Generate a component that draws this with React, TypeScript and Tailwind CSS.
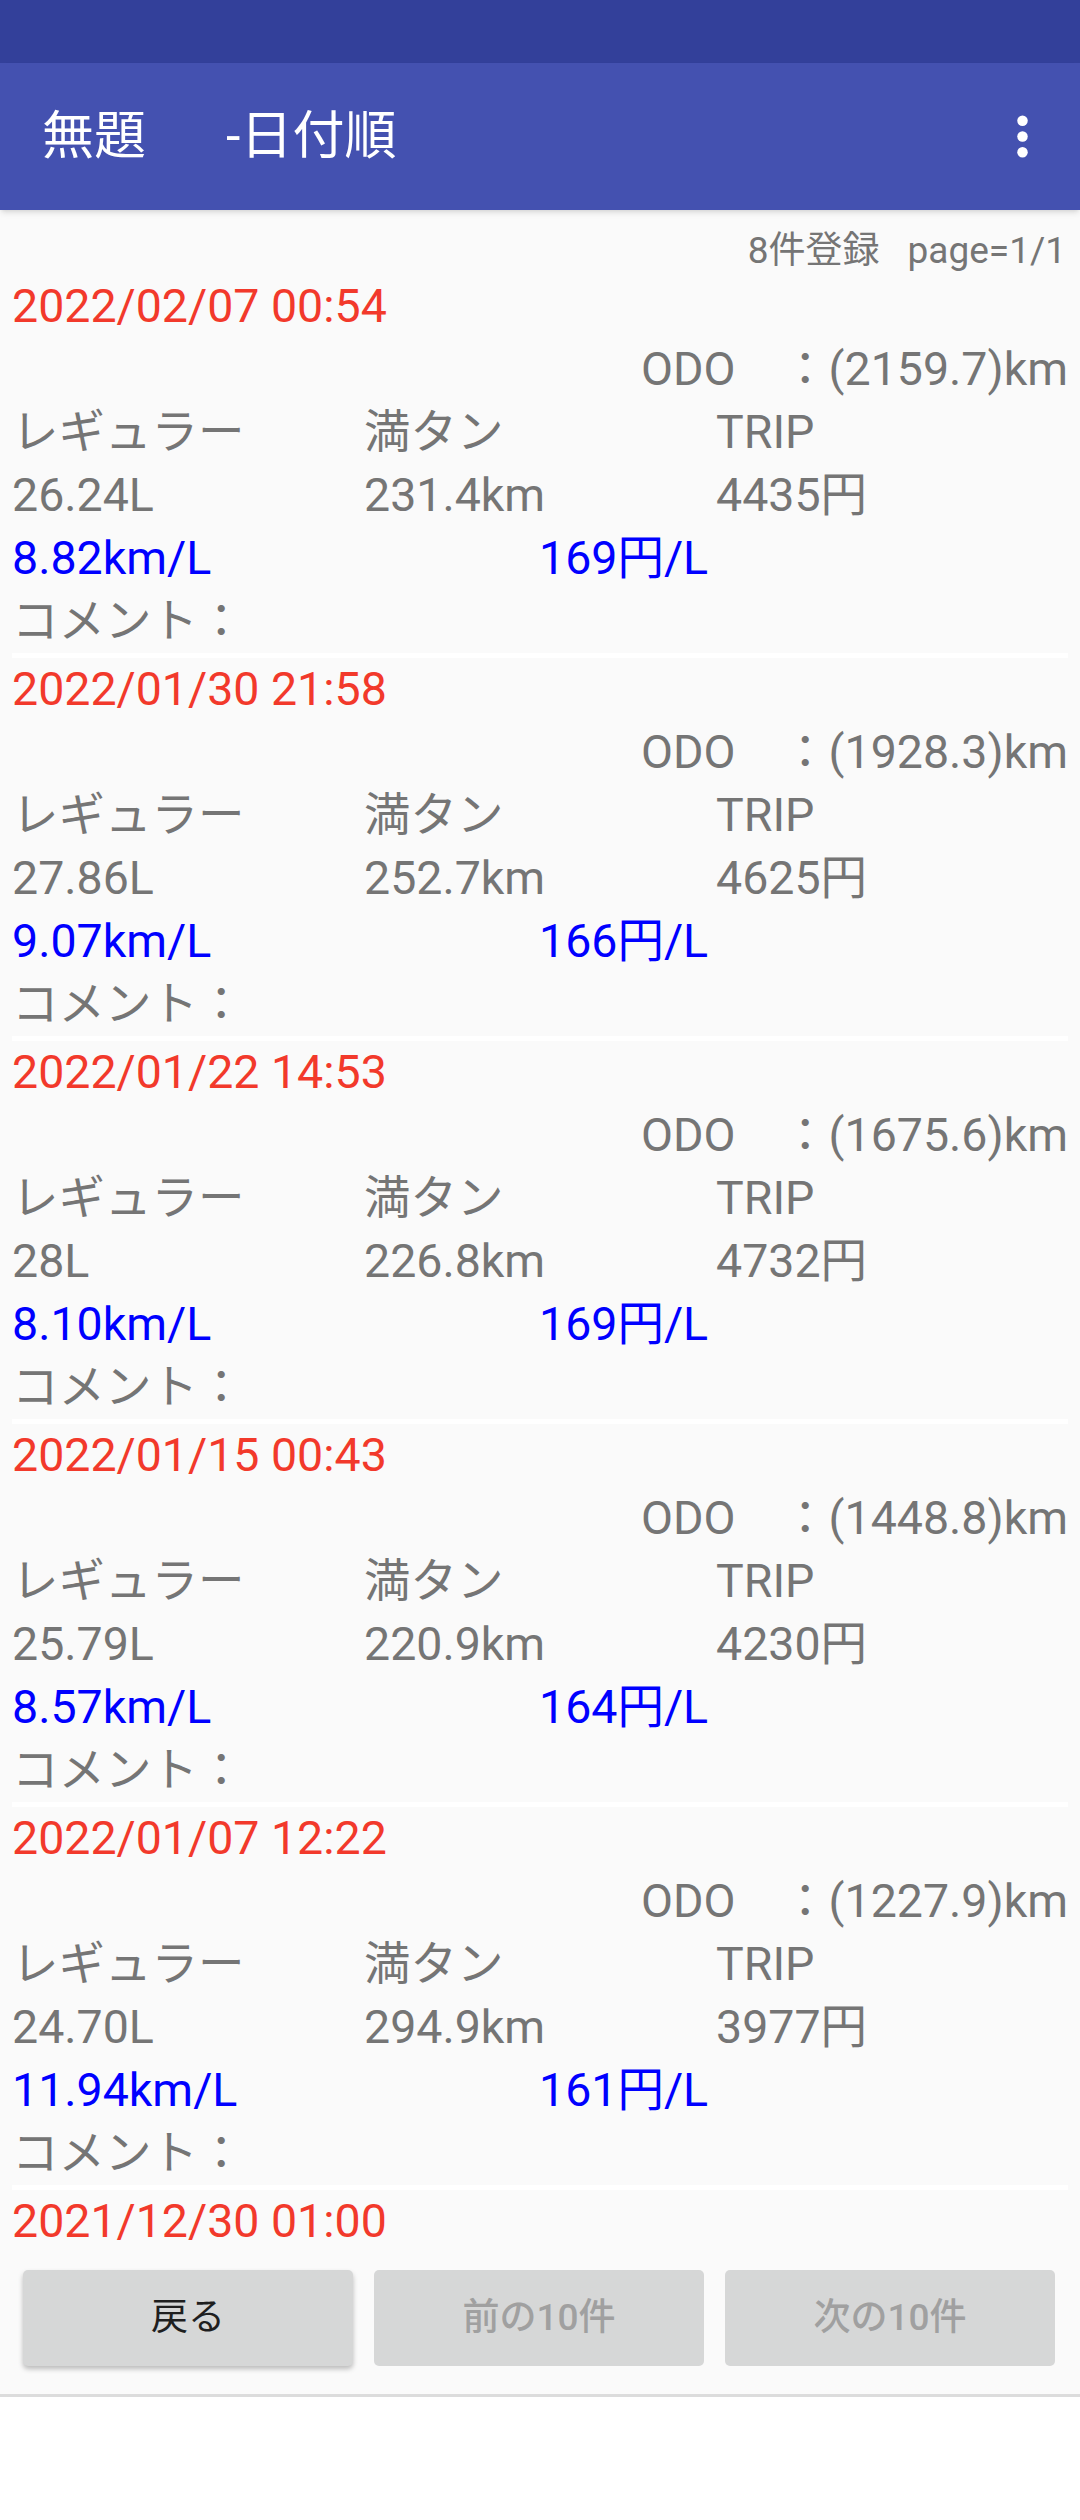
const entries = [
  { date: "2022/02/07 00:54", odo: "2159.7", liters: "26.24L", dist: "231.4km", price: "4435円", mileage: "8.82km/L", unit: "169円/L" },
  { date: "2022/01/30 21:58", odo: "1928.3", liters: "27.86L", dist: "252.7km", price: "4625円", mileage: "9.07km/L", unit: "166円/L" },
  { date: "2022/01/22 14:53", odo: "1675.6", liters: "28L", dist: "226.8km", price: "4732円", mileage: "8.10km/L", unit: "169円/L" },
  { date: "2022/01/15 00:43", odo: "1448.8", liters: "25.79L", dist: "220.9km", price: "4230円", mileage: "8.57km/L", unit: "164円/L" },
  { date: "2022/01/07 12:22", odo: "1227.9", liters: "24.70L", dist: "294.9km", price: "3977円", mileage: "11.94km/L", unit: "161円/L" },
];

// the 6th record is scrolled off; only its date row shows above the buttons
const lastDate = "2021/12/30 01:00";

const MoreVert = () => (
  <svg viewBox="0 0 24 24" className="w-[63px] h-[63px]" fill="#ffffff">
    <circle cx="12" cy="6" r="2" />
    <circle cx="12" cy="12" r="2" />
    <circle cx="12" cy="18" r="2" />
  </svg>
);

const Entry = ({ e }: { e: (typeof entries)[number] }) => (
  <>
    <div className="text-[46.5px] leading-[63px] text-[#757575]">
      <div className="h-[63px] text-[#F2392B]">{e.date}</div>
      <div className="h-[63px] flex justify-end whitespace-pre">
        <span>ODO</span>
        <span>{`　：(${e.odo})km`}</span>
      </div>
      <div className="h-[63px] grid grid-cols-3">
        <span>レギュラー</span>
        <span>満タン</span>
        <span>TRIP</span>
      </div>
      <div className="h-[63px] grid grid-cols-3">
        <span>{e.liters}</span>
        <span>{e.dist}</span>
        <span>{e.price}</span>
      </div>
      <div className="h-[63px] flex text-[#0000FF]">
        <span className="w-[527px]">{e.mileage}</span>
        <span>{e.unit}</span>
      </div>
      <div className="h-[63px]">コメント：</div>
    </div>
    <div className="h-[5px] bg-white" />
  </>
);

export default function App() {
  return (
    <div className="w-[1080px] h-[2520px] bg-white flex flex-col font-[Roboto,'Noto_Sans_CJK_JP',sans-serif]">
      <div className="h-[63px] bg-[#33409A]" />
      <div className="relative z-10 h-[147px] bg-[#4451B0] flex items-center pl-[42px] pr-[26px] text-white text-[52px] shadow-md">
        <span>無題</span>
        <span className="ml-[80px]">-日付順</span>
        <div className="ml-auto">
          <MoreVert />
        </div>
      </div>
      <div className="h-[2044px] bg-[#FAFAFA] overflow-hidden">
        <div className="h-[65px] pt-[19px] pr-[14px] text-right text-[37px] leading-[43px] text-[#757575] whitespace-pre">
          8件登録<span className="ml-[28px]">page=1/1</span>
        </div>
        <div className="px-[12px]">
          {entries.map((e) => (
            <Entry key={e.date} e={e} />
          ))}
          <div className="h-[63px] text-[46.5px] leading-[63px] text-[#F2392B]">{lastDate}</div>
        </div>
      </div>
      <div className="h-[140px] bg-[#FAFAFA] pt-[16px] px-[23px] flex gap-[21px]">
        <button className="w-[330px] h-[96px] rounded-[5px] bg-[#D6D7D7] shadow-[0_3px_5px_rgba(0,0,0,0.25)] text-[37px] text-[#1F1F1F]">
          戻る
        </button>
        <button className="w-[330px] h-[96px] rounded-[5px] bg-[#D6D7D7] text-[37px] text-[#A0A0A0] font-medium">
          前の10件
        </button>
        <button className="w-[330px] h-[96px] rounded-[5px] bg-[#D6D7D7] text-[37px] text-[#A0A0A0] font-medium">
          次の10件
        </button>
      </div>
      <div className="h-[3px] bg-[#DCDCDC]" />
      <div className="flex-1 bg-white" />
    </div>
  );
}
